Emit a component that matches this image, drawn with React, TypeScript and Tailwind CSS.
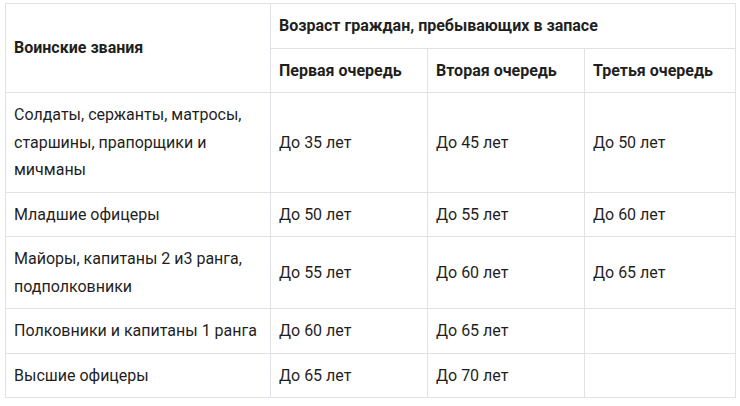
import React from "react";

const rows: [string, string, string, string][] = [
  ["Солдаты, сержанты, матросы, старшины, прапорщики и мичманы", "До 35 лет", "До 45 лет", "До 50 лет"],
  ["Младшие офицеры", "До 50 лет", "До 55 лет", "До 60 лет"],
  ["Майоры, капитаны 2 и3 ранга, подполковники", "До 55 лет", "До 60 лет", "До 65 лет"],
  ["Полковники и капитаны 1 ранга", "До 60 лет", "До 65 лет", ""],
  ["Высшие офицеры", "До 65 лет", "До 70 лет", ""],
];

export default function App() {
  const cell = "border border-[#e1e1e8] px-2 py-2 align-middle";
  return (
    <div
      className="w-[740px] h-[406px] bg-white pl-[5px] pt-[3px] text-[16px] leading-[27.5px] text-[#1f1f1f]"
      style={{ fontFamily: "Roboto, 'Noto Sans', sans-serif" }}
    >
      <table className="table-fixed border-collapse w-[730px]">
        <colgroup>
          <col className="w-[265px]" />
          <col className="w-[157px]" />
          <col className="w-[157px]" />
          <col className="w-[151px]" />
        </colgroup>
        <thead>
          <tr>
            <th rowSpan={2} className={`${cell} text-left font-bold`}>
              Воинские звания
            </th>
            <th colSpan={3} className={`${cell} text-left font-bold`}>
              Возраст граждан, пребывающих в запасе
            </th>
          </tr>
          <tr>
            <th className={`${cell} text-left font-bold`}>Первая очередь</th>
            <th className={`${cell} text-left font-bold`}>Вторая очередь</th>
            <th className={`${cell} text-left font-bold`}>Третья очередь</th>
          </tr>
        </thead>
        <tbody>
          {rows.map((r, i) => (
            <tr key={i}>
              {r.map((c, j) => (
                <td key={j} className={cell}>
                  {c}
                </td>
              ))}
            </tr>
          ))}
        </tbody>
      </table>
    </div>
  );
}
